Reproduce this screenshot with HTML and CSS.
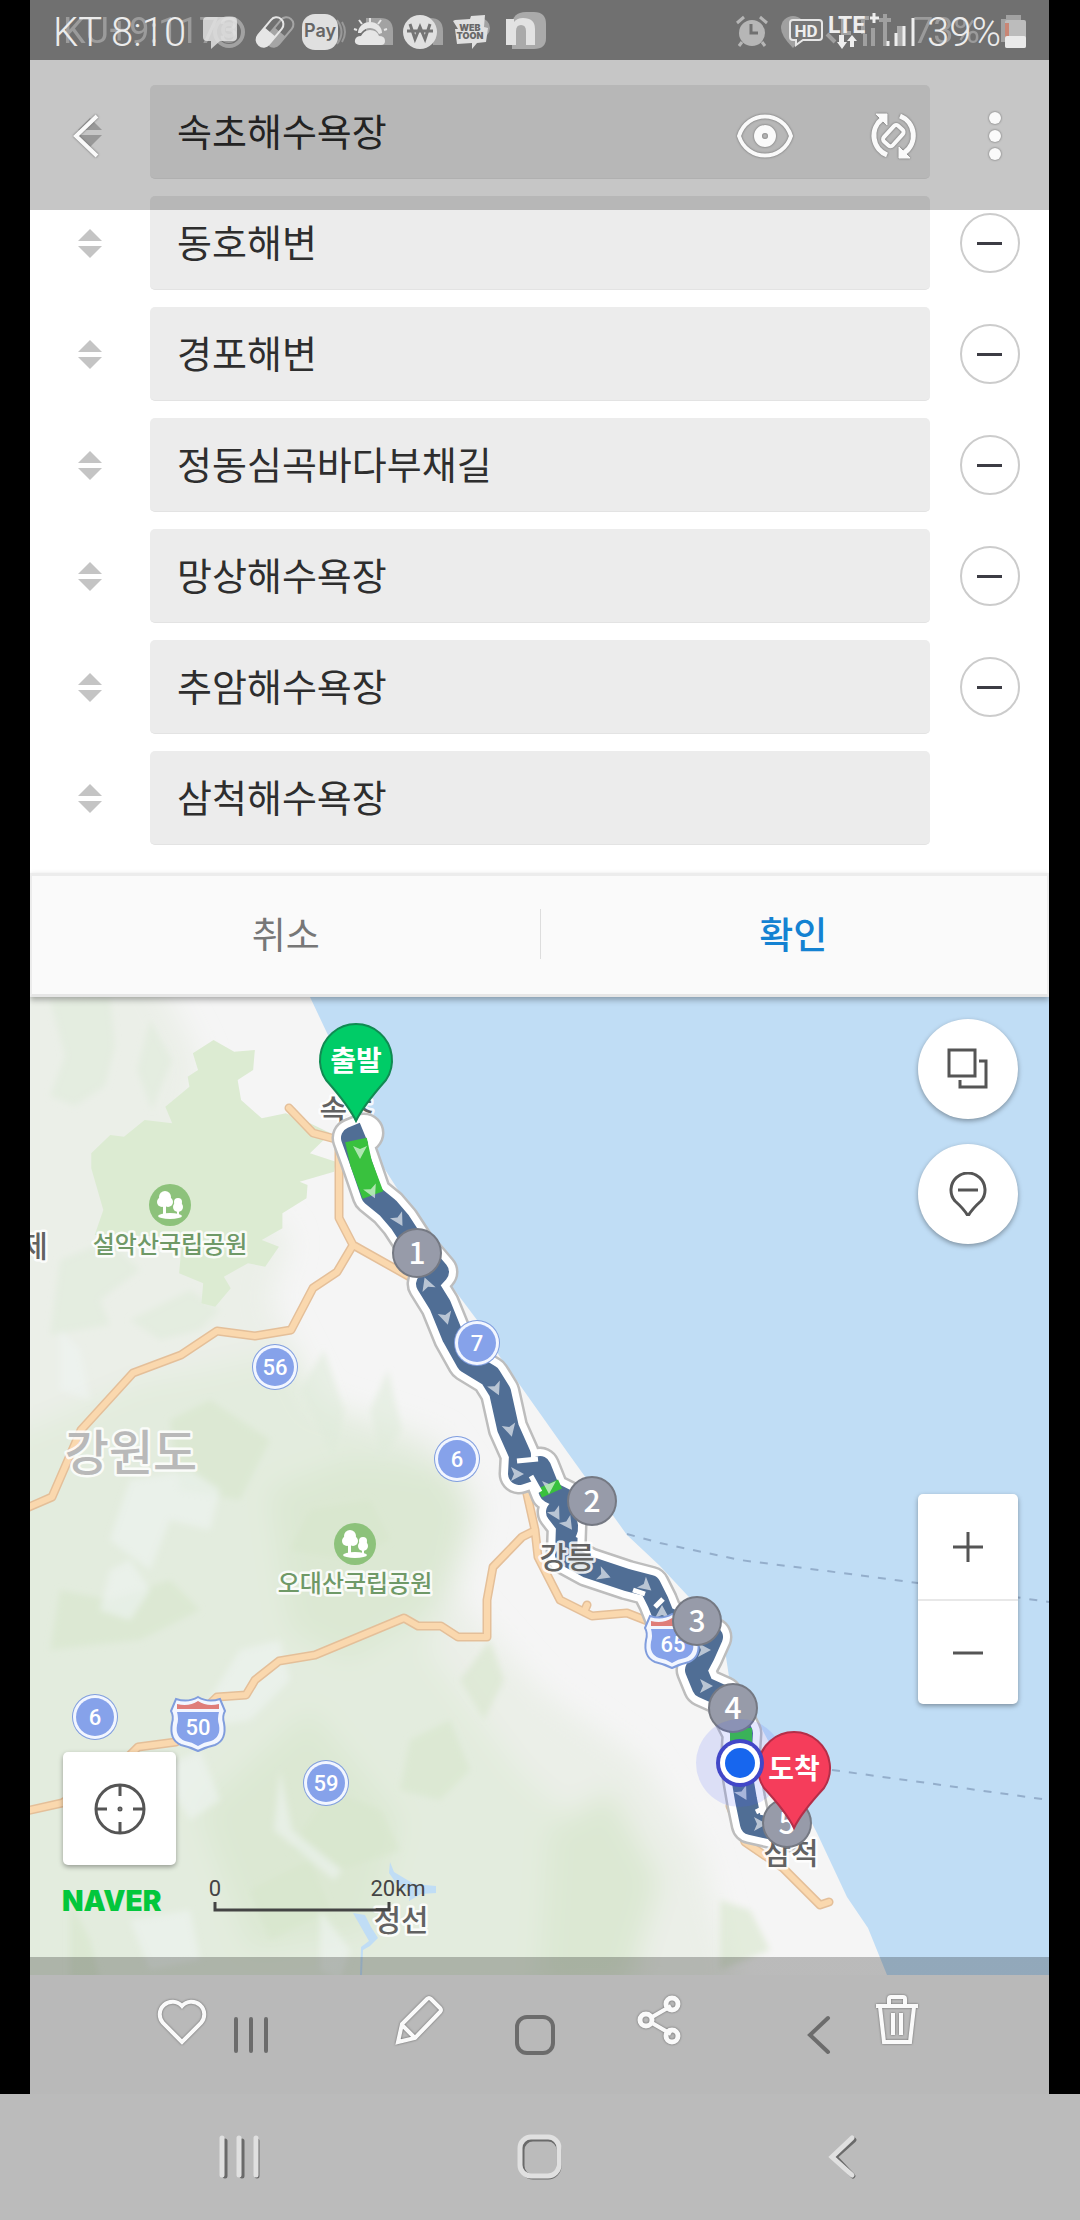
FILE: index.html
```html
<!DOCTYPE html>
<html lang="ko">
<head>
<meta charset="utf-8">
<meta name="viewport" content="width=device-width, initial-scale=1">
<title>경유지 편집</title>
<link rel="stylesheet" href="styles.css">
</head>
<body>
<div class="frame">
  <header class="status">
    <span class="clock">KT 8:10<span class="clock-ghost" aria-hidden="true">KU+9:1173</span></span>
    <svg class="status-left" viewBox="200 0 360 60" width="360" height="60" aria-hidden="true">
      <g fill="none" stroke="#a2a2a2" stroke-width="4"><circle cx="229" cy="32" r="14"/><circle cx="229" cy="30" r="6"/></g>
      <path fill="#e0e0e0" fill-opacity=".85" d="M207 17h26a4 4 0 0 1 4 4v16a4 4 0 0 1-4 4h-13l-9 8v-8h-4a4 4 0 0 1-4-4V21a4 4 0 0 1 4-4z"/>
      <g transform="translate(280 32) rotate(-50)"><rect x="-17" y="-7" width="34" height="14" rx="7" fill="none" stroke="#a5a5a5" stroke-width="2"/><path fill="#a5a5a5" d="M0-7h-10a7 7 0 0 0 0 14H0z"/></g>
      <g transform="translate(270 32) rotate(-50)"><rect x="-17" y="-7" width="34" height="14" rx="7" fill="none" stroke="#e6e6e6" stroke-width="2"/><path fill="#e6e6e6" d="M0-7h-10a7 7 0 0 0 0 14H0z"/></g>
      <path d="M337 20q9 12 0 24M342 22q6 10 0 20" fill="none" stroke="#999" stroke-width="2"/>
      <rect x="302" y="14" width="36" height="36" rx="13" fill="#e0e0e0"/>
      <text class="pay" x="320" y="37" text-anchor="middle">Pay</text>
      <path fill="#a2a2a2" d="M366 18h14q13 0 13 13v14h-27z"/>
      <g fill="#e6e6e6"><path d="M359 45q-5-1-4-5 1-4 6-4 3-6 9-6 7 0 9 6 6 0 6 5 0 4-4 4z"/><path d="M358 33a12 11 0 0 1 24 0l-3 1q-3-6-9-6-5 0-9 5z"/></g>
      <path d="M370 22v-4M362 24l-3-4M378 24l3-4M357 30l-3-1M384 30l3-1" stroke="#e6e6e6" stroke-width="2"/>
      <path fill="#a2a2a2" d="M422 18h8q13 0 13 13v14h-10V26h-11z"/>
      <circle cx="420" cy="32" r="17" fill="#e0e0e0"/>
      <path d="M410 24l5 15 5-12 5 12 5-15M407 31h26" fill="none" stroke="#747474" stroke-width="3"/>
      <circle cx="480" cy="28" r="10" fill="#a2a2a2"/>
      <path fill="#e0e0e0" d="M455 20l15-1 1-3 14-1-1 12 4 1-2 14-9 1-5 6v-6l-15 1-2-15h3l-5-8z"/>
      <text class="toon" x="470" y="31" text-anchor="middle">WEB</text>
      <text class="toon" x="470" y="39" text-anchor="middle">TOON</text>
      <path fill="#aaa" d="M512 26q0-14 14-14h8q12 0 12 12v14q0 11-12 11h-22z"/>
      <path fill="#e2e2e2" d="M506 19h8v3q3-4 9-4 12 0 12 11v16h-9V31q0-6-5-6t-5 6v14h-10z"/>
    </svg>
    <svg class="status-right" viewBox="730 0 190 60" width="190" height="60" aria-hidden="true">
      <circle cx="751" cy="33" r="13" fill="#b6b6b6"/>
      <path d="M736 23l7-6M766 23l-7-6M741 42l-3 4M761 42l3 4" stroke="#b6b6b6" stroke-width="3"/>
      <path d="M750 24v9h7" fill="none" stroke="#707070" stroke-width="3"/>
      <path fill="#a0a0a0" d="M792 16a12 12 0 0 1 12 12q0 8-12 20-12-12-12-20a12 12 0 0 1 12-12z"/>
      <path d="M842 18v15h8M856 18h12M862 18v16M826 34l8 8M864 46V34M872 46V28M884 46V14M878 20h12" stroke="#a0a0a0" stroke-width="4" fill="none"/>
      <path fill="#777" stroke="#e6e6e6" stroke-width="2" d="M792 20h26a3 3 0 0 1 3 3v14a3 3 0 0 1-3 3h-16l-7 5v-5h-3a3 3 0 0 1-3-3V23a3 3 0 0 1 3-3z"/>
      <text class="hd" x="805" y="37" text-anchor="middle">HD</text>
      <text class="lte" x="827" y="33">LTE</text>
      <path d="M869 18h9M873 13v10" stroke="#eee" stroke-width="3"/>
      <path fill="#eee" d="M838 35h5v7h3l-5 7-5-7h2zM849 47v-6h-3l5-6 5 6h-3v6z"/>
      <path d="M899 46V26" stroke="#aaa" stroke-width="6"/>
      <path d="M887 46v-5M895 46V33M903 46V26M912 46V18" stroke="#eee" stroke-width="3"/>
    </svg>
    <span class="percent">39%<span class="percent-ghost" aria-hidden="true">73%</span></span>
    <svg class="battery" viewBox="0 0 28 60" width="28" height="60" aria-hidden="true">
      <path fill="#a2a2a2" d="M0 19h5v-4h15v5h3v22H0z"/><rect x="4" y="20" width="21" height="28" rx="2" fill="#bcbcbc"/><rect x="4" y="23" width="4" height="17" fill="#c98675"/><rect x="4" y="36" width="21" height="12" rx="2" fill="#eaeaea"/>
    </svg>
  </header>

  <main>
    <form class="editor">
      <ul class="stops">
        <li><button type="button" class="grip" aria-label="순서 변경"></button><input class="place" type="text" aria-label="출발지" value="속초해수욕장"></li>
        <li><button type="button" class="grip" aria-label="순서 변경"></button><input class="place" type="text" aria-label="경유지 1" value="동호해변"><button type="button" class="remove" aria-label="삭제"></button></li>
        <li><button type="button" class="grip" aria-label="순서 변경"></button><input class="place" type="text" aria-label="경유지 2" value="경포해변"><button type="button" class="remove" aria-label="삭제"></button></li>
        <li><button type="button" class="grip" aria-label="순서 변경"></button><input class="place" type="text" aria-label="경유지 3" value="정동심곡바다부채길"><button type="button" class="remove" aria-label="삭제"></button></li>
        <li><button type="button" class="grip" aria-label="순서 변경"></button><input class="place" type="text" aria-label="경유지 4" value="망상해수욕장"><button type="button" class="remove" aria-label="삭제"></button></li>
        <li><button type="button" class="grip" aria-label="순서 변경"></button><input class="place" type="text" aria-label="경유지 5" value="추암해수욕장"><button type="button" class="remove" aria-label="삭제"></button></li>
        <li><button type="button" class="grip" aria-label="순서 변경"></button><input class="place" type="text" aria-label="도착지" value="삼척해수욕장"></li>
      </ul>
      <div class="confirm">
        <button type="button" class="cancel">취소</button>
        <button type="submit" class="ok">확인</button>
      </div>
      <div class="viewer-bar">
        <button type="button" class="back" aria-label="뒤로">
          <svg class="lit" viewBox="0 0 56 56" width="56" height="56"><path d="M39 8L18 28l21 20" stroke-width="4"/></svg>
        </button>
        <button type="button" class="eye" aria-label="보기">
          <svg class="lit" viewBox="0 0 60 56" width="60" height="56"><path d="M4 28C12 2 48 2 56 28 48 54 12 54 4 28z" stroke-width="4"/><circle cx="30" cy="28" r="7" stroke-width="8"/></svg>
        </button>
        <button type="button" aria-label="회전">
          <svg class="lit" viewBox="0 0 56 56" width="56" height="56"><path d="M22 47A21 21 0 0 1 17 11M35 8a21 21 0 0 1 4 37" stroke-width="5"/><path d="M11 6h11v11zM45 50H34V39z" fill="#fafafa" stroke-width="1"/><rect x="18" y="22" width="21" height="12" rx="3" transform="rotate(-48 28 28)" stroke-width="4"/></svg>
        </button>
        <button type="button" aria-label="더보기">
          <svg class="lit" viewBox="0 0 56 56" width="56" height="56"><g fill="#fafafa" stroke="none"><circle cx="28" cy="10" r="6"/><circle cx="28" cy="28" r="6"/><circle cx="28" cy="46" r="6"/></g></svg>
        </button>
      </div>
    </form>

    <section class="map" aria-label="지도">
      <svg class="canvas" viewBox="30 997 1019 978">
        <defs>
          <filter id="soft" x="-20%" y="-20%" width="140%" height="140%"><feGaussianBlur stdDeviation="14"/></filter>
          <filter id="fine" x="-20%" y="-20%" width="140%" height="140%"><feGaussianBlur stdDeviation="3"/></filter>
          <path id="route" d="M364 1133L352 1138 360 1160 372 1195 388 1208 400 1222 415 1245 438 1272 427 1284 440 1305 453 1337 467 1362 490 1376 500 1392 508 1428 520 1455 519 1474 540 1467 550 1492 570 1502 557 1512 567 1525 566 1555 588 1567 627 1580 650 1586 658 1602 664 1617 712 1637 704 1655 696 1670 703 1687 723 1696 742 1733 740 1765 746 1800 751 1824 787 1832"/>
          <path id="roads" d="M289 1108L313 1133 339 1140V1218L353 1245 337 1272 313 1288 291 1330 255 1336 217 1331 181 1355 133 1373 81 1430 52 1497 22 1510M353 1245L410 1277M525 1485L535 1530 538 1557 560 1600 592 1616 627 1613 650 1622M584 1612l3-7M534 1531L522 1537 493 1567 487 1600V1637H458L441 1626H418L404 1618 315 1655 279 1661 255 1680 246 1695 217 1697 193 1720 176 1742 138 1747 110 1775 62 1803 22 1812M730 1806L745 1842 783 1868 820 1905 829 1902"/>
          <path id="arrow" fill="#fff" fill-opacity=".6" d="M0 7L7-6 0-3-7-6z"/>
          <g id="park"><circle r="21" fill="#8dc27b"/><g fill="#fff"><circle cx="-5" cy="-8" r="6"/><circle cx="-8" cy="-3" r="5"/><circle cx="-2" cy="-3" r="5"/><circle cx="8" cy="-3" r="4"/><circle cx="8" cy="2" r="5"/><path d="M-7 0h3v10h-3zM7 3h2v8H7z"/><ellipse cy="11" rx="12" ry="3"/></g></g>
          <g id="national"><circle r="23" fill="#7f9ddf"/><circle r="22" fill="#f2f6ff"/><circle r="19" fill="#86a2ea"/></g>
          <g id="expressway"><path fill="#f2f6ff" stroke="#809ddd" stroke-width="2" d="M-22-25Q-10-21 0-27 10-21 22-25l5 12q-3 5-1 12 3 17-9 22Q8 23 0 27-8 23-17 21-29 16-26-1-24-8-27-13z"/><path fill="#86a2ea" d="M-21-12h42Q19-5 21 1q2 12-8 16Q6 18 0 22-6 18-13 17-23 13-21 1-19-5-21-12z"/><path fill="#df7d79" d="M-21-20q12 3 21-3 9 6 21 3v5h-42z"/></g>
        </defs>

        <rect x="30" y="997" width="1019" height="978" fill="#f5f5f5"/>
        <g filter="url(#soft)">
          <path fill="#ebefe8" d="M0 960H150L200 1060 190 1130 290 1240 270 1300 320 1400 440 1440 480 1500 460 1600 540 1690 640 1760 700 1850 740 2000H0z"/>
          <path fill="#e3ecde" d="M0 1440l140-60 60-10 90-20 30 60 90 30 60 80-40 130 90 120 100 90 20 140-640 20z"/>
          <path fill="#dce8d3" d="M270 1490l80-30 100 10 20 50-40 90-80 50-60-30zM200 1810l110-100 90 110-30 110-120 20zM550 1830l60-40 50 90-30 100-90 10z"/>
        </g>
        <g filter="url(#fine)" fill-opacity=".6">
          <path fill="#e0ebda" d="M50 1000l60-4 5 50-10 40-30 20-25-10 15-40zM150 1020l22 40-20 50-15-40zM60 1260l50-20 30 30-40 30 10 25-60 10zM190 1290l30 20-20 20-40 10-30-20zM300 1390l24-40 20 60-10 50zM370 1410l18-40 14 60-20 30z"/>
          <path fill="#d7e6cc" d="M60 1590l50 10 60-20 30 30-60 30-90 10zM310 1510l60-10 20 40-40 20-60-10zM330 1790l50 20 20 40-60 20-50-20zM250 1890l60-30 20 50-60 30zM410 1740l40-20 20 50-30 30-40-10zM170 1420l40-20 60 40-30 60-60-10zM70 1900l20 40 10 40H70zM460 1680l30-40 14 40-20 40zM720 1900l30 10 20 40-50 20z"/>
          <path fill="#eff4f2" d="M130 1480l60-10 30 20-10 40-40-10-20 50-40-30zM110 1570l20-10 20 30-20 30-30-10zM240 1650l40-10 10 40-40 40-60 10zM160 1770l40-20 20 50-30 20zM280 1770l12 60 50 40-8 10-60-50zM130 1920l60-10 10 50-50 10zM320 1910l30 40-10 30-20-10zM60 1330l20 20 10 50-30-10z"/>
        </g>
        <path fill="#dcebd2" transform="translate(0 990) scale(.3444 .3333)" d="M560 190L620 150 680 185 740 180 735 240 690 270 700 330 760 385 830 370 900 400 960 430 900 490 975 515 970 545 870 575 893 585 890 625 820 670 820 715 760 750 810 770 770 830 720 820 650 860 670 895 625 950 585 940 590 880 520 850 530 740 275 735 300 660 265 535 265 490 320 435 360 440 420 390 500 400 480 350 550 290 545 260 575 240z"/>
        <path fill="#c0ddf5" d="M310 997L327 1033 372 1130 377 1157 400 1193 423 1227 437 1253 447 1280 477 1320 500 1357 568 1453 627 1535 660 1566 687 1595 722 1630 729 1677 757 1720 800 1800 817 1833 847 1897 868 1928 887 1975H1049V997z"/>
        <path fill="#c0ddf5" d="M353 1913l12 2 6 12 7 11-8 8-7 4-1 25h-2l1-28 8-6zM390 1862l4 10 20 12 22 2v7l-15 1-12 7 1-8-14-10-7-10z"/>
        <path class="ferry" d="M627 1534L660 1543 740 1560 850 1574 918 1583 1049 1602M832 1770L920 1782 970 1789 1049 1800"/>
        <use href="#roads" class="road-edge"/><use href="#roads" class="road"/>

        <text class="region" x="131" y="1470">강원도</text>
        <text class="city" x="34" y="1257">제</text>
        <text class="city" x="347" y="1121">속초</text>
        <text class="city" x="401" y="1931">정선</text>
        <use href="#park" x="170" y="1205"/><text class="park" x="170" y="1253">설악산국립공원</text>
        <use href="#park" x="355" y="1544"/><text class="park" x="355" y="1592">오대산국립공원</text>

        <use href="#route" class="route-edge"/><use href="#route" class="route-case"/><use href="#route" class="route"/>
        <path class="route fast" d="M356 1140L361 1163 373 1195M548 1484L552 1493M741 1728L741 1745"/>
        <path d="M517 1461L538 1459M531 1476L540 1492M578 1538L582 1528M633 1590l12 4M655 1607l8-8M756 1812l8-4" stroke="#fff" stroke-width="5" fill="none"/>
        <use href="#arrow" x="360" y="1152"/>
        <g transform="translate(372 1192) rotate(-25)"><use href="#arrow"/></g>
        <g transform="translate(399 1220) rotate(-30)"><use href="#arrow"/></g>
        <g transform="translate(427 1284) rotate(160)"><use href="#arrow"/></g>
        <g transform="translate(446 1318) rotate(-15)"><use href="#arrow"/></g>
        <g transform="translate(496 1389) rotate(-25)"><use href="#arrow"/></g>
        <g transform="translate(510 1430) rotate(-15)"><use href="#arrow"/></g>
        <g transform="translate(517 1474) rotate(-90)"><use href="#arrow"/></g>
        <g transform="translate(549 1487)"><use href="#arrow"/></g>
        <g transform="translate(556 1514) rotate(-30)"><use href="#arrow"/></g>
        <g transform="translate(568 1524) rotate(-35)"><use href="#arrow"/></g>
        <g transform="translate(604 1575) rotate(-70)"><use href="#arrow"/></g>
        <g transform="translate(646 1586) rotate(-50)"><use href="#arrow"/></g>
        <g transform="translate(662 1612) rotate(180)"><use href="#arrow"/></g>
        <g transform="translate(704 1650) rotate(-90)"><use href="#arrow"/></g>
        <g transform="translate(706 1686) rotate(-90)"><use href="#arrow"/></g>
        <g transform="translate(743 1794) rotate(-30)"><use href="#arrow"/></g>
        <g transform="translate(760 1824) rotate(-90)"><use href="#arrow"/></g>

        <text class="city" x="567" y="1568">강릉</text>
        <text class="city" x="791" y="1864">삼척</text>
        <use href="#national" x="477" y="1343"/><text class="badge" x="477" y="1351">7</text>
        <use href="#national" x="275" y="1367"/><text class="badge" x="275" y="1375">56</text>
        <use href="#national" x="457" y="1459"/><text class="badge" x="457" y="1467">6</text>
        <use href="#national" x="95" y="1717"/><text class="badge" x="95" y="1725">6</text>
        <use href="#national" x="326" y="1783"/><text class="badge" x="326" y="1791">59</text>
        <use href="#expressway" x="198" y="1724"/><text class="badge" x="198" y="1735">50</text>
        <use href="#expressway" x="672" y="1641"/><text class="badge" x="673" y="1652">65</text>
        <g class="via"><circle cx="417" cy="1253" r="24"/><circle cx="592" cy="1501" r="24"/><circle cx="697" cy="1621" r="24"/><circle cx="733" cy="1708" r="24"/><circle cx="787" cy="1823" r="24"/></g>
        <g class="via-no"><text x="417" y="1264">1</text><text x="592" y="1512">2</text><text x="697" y="1632">3</text><text x="733" y="1719">4</text><text x="787" y="1834">5</text></g>

        <circle cx="740" cy="1763" r="44" fill="#4a5cff" fill-opacity=".14"/>
        <path fill="#00cc67" stroke="#118a52" stroke-width="2" d="M356 1121Q349 1106 326 1080A36 36 0 1 1 386 1080Q363 1106 356 1121z"/>
        <path fill="#f53d5b" stroke="#b42e48" stroke-width="2" d="M794 1828Q787 1813 764 1788A36 36 0 1 1 824 1788Q801 1813 794 1828z"/>
        <text class="pin" x="356" y="1071">출발</text>
        <text class="pin" x="794" y="1779">도착</text>
        <circle cx="740" cy="1763" r="24" fill="#4247c8"/><circle cx="740" cy="1763" r="20" fill="#fff"/><circle cx="740" cy="1763" r="15" fill="#1766ee"/>

        <text class="logo" x="62" y="1911">NAVER</text>
        <text class="scale" x="215" y="1896">0</text><text class="scale" x="398" y="1896">20km</text>
        <path d="M215 1902v8h174v-8" fill="none" stroke="#444" stroke-width="3"/>
      </svg>
      <div class="map-tools">
        <button type="button" class="round" aria-label="지도 종류"><svg viewBox="0 0 44 44" width="44" height="44"><path d="M3 3h26v26H3zM33 14h7v26H14v-7"/></svg></button>
        <button type="button" class="round" aria-label="핀 숨기기"><svg viewBox="0 0 44 44" width="44" height="44"><path d="M22 44Q18 37 9 29A17 17 0 1 1 35 29Q26 37 22 44zM12 18h20"/></svg></button>
      </div>
      <div class="zoom">
        <button type="button" aria-label="확대"><svg viewBox="0 0 44 44" width="44" height="44"><path d="M7 22h30M22 7v30"/></svg></button>
        <button type="button" aria-label="축소"><svg viewBox="0 0 44 44" width="44" height="44"><path d="M7 22h30"/></svg></button>
      </div>
      <button type="button" class="locate" aria-label="현재 위치"><svg viewBox="0 0 56 56" width="56" height="56"><circle cx="28" cy="28" r="24"/><path d="M28 4v11M28 52V41M4 28h11M52 28H41"/><circle cx="28" cy="28" r="1"/></svg></button>
    </section>
  </main>

  <div class="actions">
    <div class="inner-nav" aria-hidden="true">
      <svg viewBox="0 0 44 44" width="44" height="44"><path d="M7 6v32M22 6v32M37 6v32"/></svg>
      <svg viewBox="0 0 44 44" width="44" height="44"><rect x="4" y="4" width="36" height="36" rx="10"/></svg>
      <svg viewBox="0 0 44 44" width="44" height="44"><path d="M31 5L13 22l18 17"/></svg>
    </div>
    <button type="button" aria-label="즐겨찾기"><svg class="lit" viewBox="0 0 56 56" width="56" height="56"><path d="M28 50L9 31A12 12 0 0 1 28 14 12 12 0 0 1 47 31z" stroke-width="4"/></svg></button>
    <button type="button" aria-label="편집"><svg class="lit" viewBox="0 0 56 56" width="56" height="56"><path d="M6 50l4-18L35 7q2-2 4 0l9 9q2 2 0 4L23 46zM10 33l12 12" stroke-width="4"/></svg></button>
    <button type="button" aria-label="공유"><svg class="lit" viewBox="0 0 56 56" width="56" height="56"><path d="M21 25l19-11M21 31l19 11" stroke-width="4"/><circle cx="15" cy="28" r="6" stroke-width="5"/><circle cx="41" cy="12" r="6" stroke-width="5"/><circle cx="41" cy="44" r="6" stroke-width="5"/></svg></button>
    <button type="button" aria-label="삭제"><svg class="lit" viewBox="0 0 56 56" width="56" height="56"><path d="M7 14h42M20 13V7q0-2 2-2h12q2 0 2 2v6M11 15l4 35h26l4-35M24 21v22M32 21v22" stroke-width="4"/></svg></button>
  </div>
</div>

<nav class="system-nav" aria-label="시스템">
  <button type="button" aria-label="최근 앱"><svg viewBox="0 0 48 48" width="48" height="48"><path class="shade" d="M11 8v35M28 8v35M43 8v35"/><path d="M8 5v37M25 5v37M42 5v37"/></svg></button>
  <button type="button" aria-label="홈"><svg viewBox="0 0 48 48" width="48" height="48"><rect class="shade" x="6" y="6" width="37" height="38" rx="11"/><rect x="4" y="4" width="39" height="39" rx="11"/></svg></button>
  <button type="button" aria-label="뒤로"><svg viewBox="0 0 48 48" width="48" height="48"><path class="shade" d="M36 7L17 24l18 19"/><path d="M34 5L14 24l20 18"/></svg></button>
</nav>
</body>
</html>
```
FILE: styles.css
```css
* { box-sizing: border-box; }
body {
  margin: 0;
  background: #000;
  color: #333;
  font-family: "Noto Sans CJK KR", "Noto Sans", sans-serif;
}
button {
  display: flex;
  align-items: center;
  justify-content: center;
  margin: 0;
  padding: 0;
  border: 0;
  background: none;
  font: inherit;
  color: inherit;
}
svg { display: block; flex: none; }
.frame { margin: 0 31px 0 30px; background: #fff; }

/* status bar */
.status {
  display: flex;
  align-items: center;
  height: 60px;
  padding: 0 20px 0 23px;
  background: #707070;
  color: #ececec;
  font: 300 40px/60px Roboto, sans-serif;
  overflow: hidden;
}
.clock, .percent { position: relative; white-space: nowrap; padding-top: 6px; }
.clock { width: 147px; }
.clock-ghost, .percent-ghost { position: absolute; left: 10px; top: 4px; opacity: .35; font-size: 36px; font-weight: 400; }
.percent-ghost { left: -14px; }
.status-right { margin-left: auto; }
.percent { width: 74px; margin-left: 6px; }
.pay { font: 600 18px Inter, sans-serif; fill: #666; }
.toon { font: 900 9px Inter, sans-serif; fill: #686868; }
.lte { font: 700 23px Roboto, sans-serif; fill: #eee; }
.hd { font: 700 17px Roboto, sans-serif; fill: #eee; }

/* stop list */
.editor { position: relative; }
.stops {
  display: grid;
  gap: 17px;
  margin: 0;
  padding: 25px 0 28px;
  list-style: none;
}
.stops li {
  display: grid;
  grid-template-columns: 120px 1fr 119px;
  align-items: center;
}
.place {
  width: 100%;
  height: 94px;
  padding: 0 27px 4px;
  border: 0;
  border-bottom: 1px solid #e3e3e3;
  border-radius: 5px;
  background: #ececec;
  color: #2e2e2e;
  font: 400 38px/56px "Noto Sans CJK KR", sans-serif;
}
.grip { flex-direction: column; gap: 5px; height: 60px; }
.grip::before, .grip::after { content: ""; border: 12px solid transparent; }
.grip::before { border-top: 0; border-bottom-color: #c4c4c4; }
.grip::after { border-bottom: 0; border-top-color: #c4c4c4; }
.remove {
  justify-self: center;
  width: 60px;
  height: 60px;
  border: 2px solid #ccc;
  border-radius: 50%;
}
.remove::before { content: ""; width: 25px; height: 3px; background: #3c3c44; }

.confirm {
  position: relative;
  z-index: 1;
  display: grid;
  grid-template-columns: 1fr 1fr;
  height: 124px;
  border: 3px solid #ececec;
  border-width: 3px 2px;
  border-bottom-color: #e6e6e6;
  background: #fafafa;
  box-shadow: 0 3px 6px rgba(0, 0, 0, .3);
  font-size: 37px;
  line-height: 50px;
}
.confirm button { padding-bottom: 4px; }
.confirm::after {
  content: "";
  position: absolute;
  left: 50%;
  top: 33px;
  width: 1px;
  height: 50px;
  background: #ddd;
}
.cancel { color: #777; }
.ok { color: #1482d2; font-weight: 500; }

.viewer-bar {
  position: absolute;
  inset: 0 0 auto;
  display: flex;
  align-items: center;
  gap: 46px;
  height: 150px;
  padding: 2px 26px 0 28px;
  background: rgba(0, 0, 0, .225);
}
.back { margin-right: auto; }
.eye { margin-right: 24px; }
.lit {
  fill: none;
  stroke: #fafafa;
  filter: drop-shadow(0 0 1px #666);
}

/* map */
.map { position: relative; }
.canvas { width: 100%; height: auto; }
.road-edge, .road, .route-edge, .route-case, .route, .ferry { fill: none; stroke-linejoin: round; }
.road-edge { stroke: #e4bf99; stroke-width: 9px; stroke-linecap: round; }
.road { stroke: #fad8ae; stroke-width: 6px; stroke-linecap: round; }
.route-edge { stroke: #bdbdbd; stroke-width: 41px; stroke-linecap: round; }
.route-case { stroke: #fff; stroke-width: 36px; stroke-linecap: round; }
.route { stroke: #506e95; stroke-width: 22px; }
.fast { stroke: #39c13e; stroke-linejoin: round; }
.ferry { stroke: #94aecb; stroke-width: 2px; stroke-dasharray: 8 9; }
.canvas text { text-anchor: middle; }
.region, .city, .park { paint-order: stroke; stroke: #fff; stroke-opacity: .85; stroke-width: 5px; stroke-linejoin: round; }
.region { font-size: 48px; font-weight: 500; fill: #b9b9b9; }
.city { font-size: 30px; font-weight: 500; fill: #626262; }
.park { font-size: 24px; font-weight: 500; fill: #6f9967; }
.badge { font: 500 22px Roboto, sans-serif; fill: #fff; }
.via { fill: #979ba9; stroke: #757983; stroke-width: 2px; }
.via-no { font: 500 30px "Noto Sans CJK KR", sans-serif; fill: #fff; }
.pin { font-size: 28px; font-weight: 700; fill: #fff; }
.canvas .logo { font: 900 28px Inter, sans-serif; fill: #03c73c; text-anchor: start; }
.scale { font: 400 22px Roboto, sans-serif; fill: #444; }

.map-tools {
  position: absolute;
  top: 22px;
  right: 31px;
  display: grid;
  gap: 25px;
}
.round, .zoom, .locate {
  background: #fff;
  box-shadow: 0 2px 5px rgba(0, 0, 0, .35);
}
.map-tools svg, .zoom svg, .locate svg { fill: none; stroke: #555; stroke-width: 3px; }
.round { width: 100px; height: 100px; border-radius: 50%; }
.zoom {
  position: absolute;
  right: 31px;
  bottom: 271px;
  width: 100px;
  border-radius: 5px;
}
.zoom button { width: 100%; height: 105px; }
.zoom button + button { border-top: 2px solid #e8e8e8; }
.locate {
  position: absolute;
  left: 33px;
  bottom: 110px;
  width: 113px;
  height: 113px;
  border-radius: 5px;
}

/* viewer actions laid over the inner screen's navigation */
.actions {
  position: relative;
  display: grid;
  grid-template-columns: repeat(4, 1fr);
  height: 137px;
  margin-top: -18px;
  padding: 0 33px 11px;
  background: linear-gradient(rgba(0, 0, 0, .24) 18px, #b9b9b9 18px);
}
.inner-nav {
  position: absolute;
  inset: 0;
  display: grid;
  grid-template-columns: repeat(3, 1fr);
  place-items: center;
  padding: 18px 88px 0 79px;
  fill: none;
  stroke: #6c6c6c;
  stroke-width: 4px;
  stroke-linecap: round;
}
.actions button { position: relative; }

.system-nav {
  display: grid;
  grid-template-columns: repeat(3, 1fr);
  height: 126px;
  padding: 0 87px;
  background: #bbb;
}
.system-nav svg {
  fill: none;
  stroke: #e0e0e0;
  stroke-width: 5px;
  stroke-linecap: round;
}
.system-nav .shade { stroke: #6a6a6a; }
```
